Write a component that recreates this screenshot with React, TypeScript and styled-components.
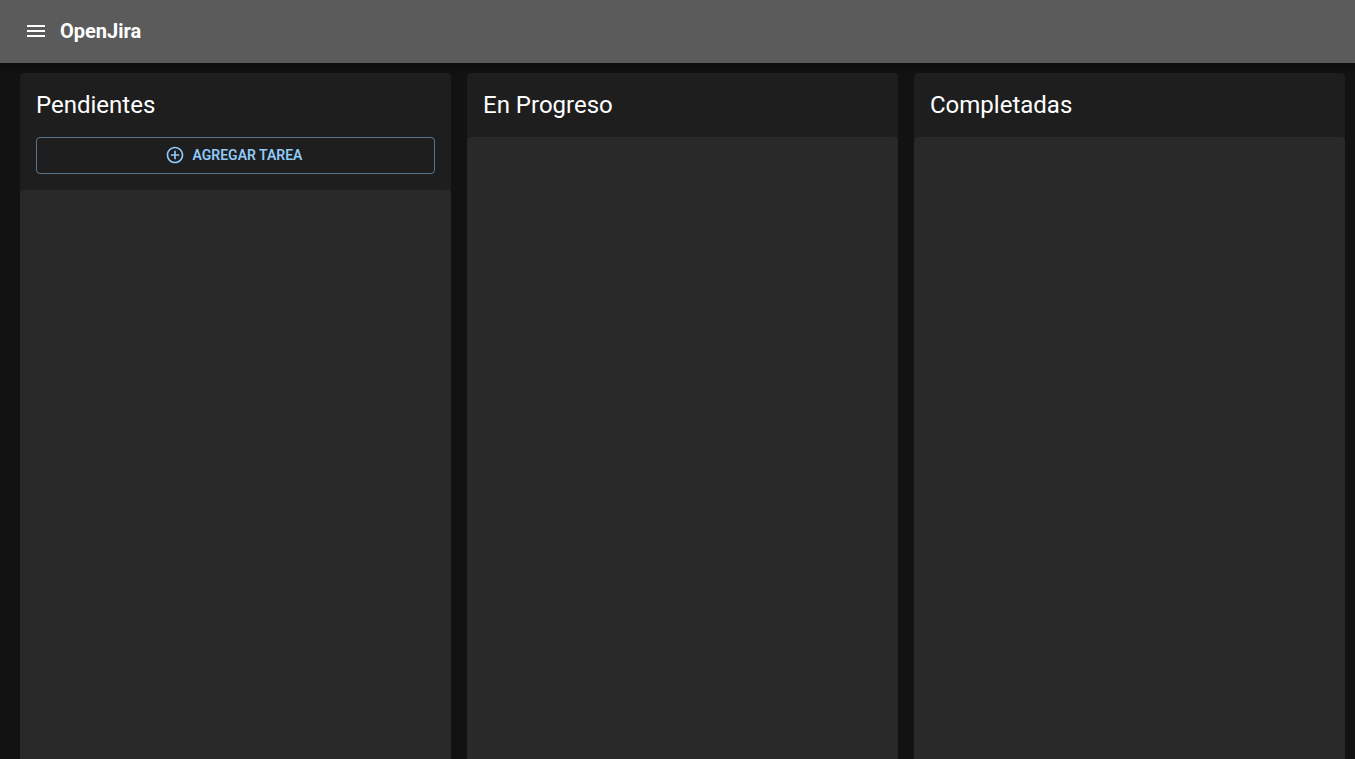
import React from "react";
import styled, { createGlobalStyle } from "styled-components";

const GlobalStyle = createGlobalStyle`
  *, *::before, *::after { box-sizing: border-box; }
  body {
    margin: 0;
    background: #121212;
    color: #fff;
    font-family: Roboto, "Liberation Sans", sans-serif;
  }
`;

const Page = styled.div`
  display: flex;
  flex-direction: column;
  min-height: 100vh;
`;

const AppBar = styled.header`
  display: flex;
  align-items: center;
  height: 63px;
  padding: 0 24px 1px;
  background: #5b5b5b;
  box-shadow:
    0 2px 4px -1px rgba(0, 0, 0, 0.2),
    0 4px 5px 0 rgba(0, 0, 0, 0.14),
    0 1px 10px 0 rgba(0, 0, 0, 0.12);
`;

const MenuButton = styled.button`
  display: flex;
  margin: 0 12px 0 0;
  padding: 0;
  border: 0;
  background: none;
  color: #fff;
  cursor: pointer;
`;

const Icon = styled.svg<{ $size: number }>`
  width: ${({ $size }) => $size}px;
  height: ${({ $size }) => $size}px;
  fill: currentColor;
  flex-shrink: 0;
`;

const Brand = styled.h1`
  margin: 0;
  font-size: 20px;
  font-weight: 700;
  line-height: 32px;
`;

const Board = styled.main`
  flex: 1;
  display: grid;
  grid-template-columns: repeat(3, minmax(0, 1fr));
  gap: 16px;
  padding: 10px 10px 0 20px;
`;

const Column = styled.section`
  display: flex;
  flex-direction: column;
  border-radius: 4px 4px 0 0;
  background: #1e1e1e;
`;

const ColumnTitle = styled.h2`
  margin: 0;
  padding: 16px;
  font-size: 24px;
  font-weight: 400;
  line-height: 32px;
`;

const Actions = styled.div`
  padding: 0 16px 16px;
`;

const AddButton = styled.button`
  display: flex;
  align-items: center;
  justify-content: center;
  gap: 8px;
  width: 100%;
  height: 37px;
  padding: 0 18px 2px 14px;
  border: 1px solid rgba(144, 202, 249, 0.5);
  border-radius: 4px;
  background: transparent;
  color: #90caf9;
  font-family: inherit;
  font-size: 14px;
  font-weight: 600;
  line-height: 24px;
  text-transform: uppercase;
  cursor: pointer;
`;

const TaskList = styled.div`
  flex: 1;
  border-radius: 4px 4px 0 0;
  background: #292929;
`;

const columns = [
  { title: "Pendientes", canAdd: true },
  { title: "En Progreso", canAdd: false },
  { title: "Completadas", canAdd: false },
];

export default function App() {
  return (
    <Page>
      <GlobalStyle />
      <AppBar>
        <MenuButton type="button" aria-label="Menú">
          <Icon $size={24} viewBox="0 0 24 24" aria-hidden="true">
            <path d="M3 18h18v-2H3v2zm0-5h18v-2H3v2zm0-7v2h18V6H3z" />
          </Icon>
        </MenuButton>
        <Brand>OpenJira</Brand>
      </AppBar>
      <Board>
        {columns.map(({ title, canAdd }) => (
          <Column key={title}>
            <ColumnTitle>{title}</ColumnTitle>
            {canAdd && (
              <Actions>
                <AddButton type="button">
                  <Icon $size={20} viewBox="0 0 24 24" aria-hidden="true">
                    <path d="M13 7h-2v4H7v2h4v4h2v-4h4v-2h-4V7zm-1-5C6.48 2 2 6.48 2 12s4.48 10 10 10 10-4.48 10-10S17.52 2 12 2zm0 18c-4.41 0-8-3.59-8-8s3.59-8 8-8 8 3.59 8 8-3.59 8-8 8z" />
                  </Icon>
                  Agregar tarea
                </AddButton>
              </Actions>
            )}
            <TaskList />
          </Column>
        ))}
      </Board>
    </Page>
  );
}
